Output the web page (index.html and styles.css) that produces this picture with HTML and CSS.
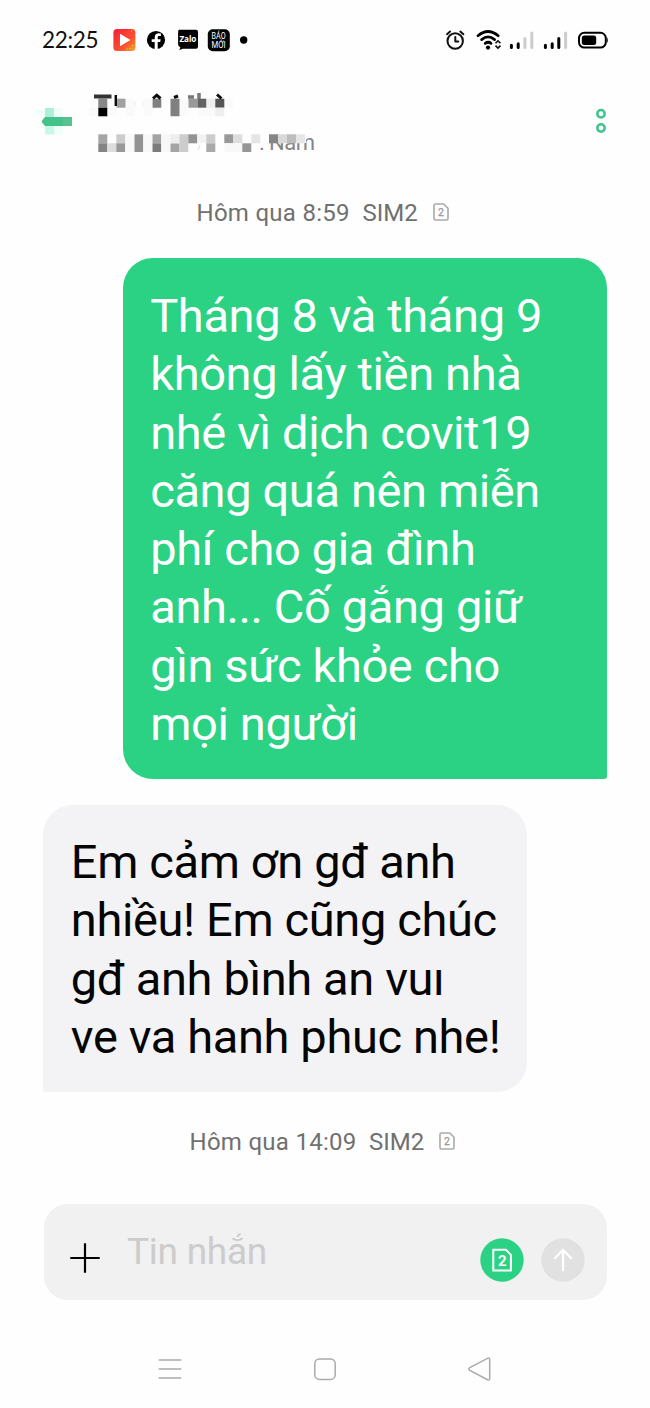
FILE: index.html
```
<!DOCTYPE html>
<html lang="vi">
<head>
<meta charset="utf-8">
<title>Tin nhắn</title>
<link rel="stylesheet" href="styles.css">
</head>
<body>
<div class="phone">
  <div class="status">
    <span class="clock">22:25</span>
    <svg class="apps" width="140" height="26" viewBox="0 0 140 26">
      <defs><linearGradient id="play" x1="0" y1="0" x2="1" y2="1"><stop offset="0.1" stop-color="#fa2438"/><stop offset="0.65" stop-color="#fb5430"/><stop offset="1" stop-color="#f4a52a"/></linearGradient></defs>
      <rect x="1.4" y="2" width="22" height="22" rx="3.5" fill="url(#play)"/>
      <path d="M8 6.7 18.4 13 8 19.3z" fill="#fff"/>
      <path d="M17 21.5h1.5M20 18.5h1.5M20.5 21.5h1M14.5 22h1M19 4h1" stroke="#e3c032" stroke-width="1.5"/>
      <circle cx="44" cy="13" r="9.1" fill="#000"/>
      <path d="M42.7 22.3v-7.2h-3v-2.8h3v-1.8c0-3 1.6-4.3 4.2-4.3l2 .2v2.5h-1.5c-1.3 0-1.7.7-1.7 1.6v1.8h3l-.5 2.8h-2.5v7.2z" fill="#fff"/>
      <path d="M67.3 2.8H84q2 0 2 2v15q0 2-2 2H71l-3.8 1.2 1.2-2.4q-2.3-1.3-2.3-3V4.8q0-2 1.2-2z" fill="#000"/>
      <text class="zalo" x="67.5" y="15.4" textLength="16.8">Zalo</text>
      <rect x="95.8" y="2.2" width="22" height="22" rx="5" fill="#000"/>
      <text class="bao" x="99.6" y="12.2" textLength="14" lengthAdjust="spacingAndGlyphs">BÁO</text>
      <text class="bao" x="99.6" y="21.3" textLength="14" lengthAdjust="spacingAndGlyphs">MỚI</text>
      <circle cx="131.7" cy="13" r="3.7" fill="#000"/>
    </svg>
    <svg class="signals" width="164" height="26" viewBox="0 0 164 26">
      <g fill="none" stroke="#111" stroke-width="2" stroke-linecap="round" stroke-linejoin="round">
        <circle cx="10.2" cy="14" r="7.7"/><path d="M10.3 10v4.4h3M2 7.2 5.1 4.6M15.3 4.6l3.1 2.6"/>
      </g>
      <g fill="none" stroke="#000" stroke-width="2.7" stroke-linecap="round">
        <path d="M33 8.7q10-8.4 20.2 0"/><path d="M36.6 12.6q6.5-5.5 13 0"/><path d="M40.2 16.4q3-2.3 5.8 0"/>
      </g>
      <circle cx="43" cy="20.6" r="2.1"/>
      <path d="M50.5 16.3 53 13.8l2.5 2.5M50.5 18.6l2.5 2.5 2.5-2.5" fill="none" stroke="#111" stroke-width="1.6"/>
      <g stroke-width="3" stroke-linecap="round" fill="none">
        <path stroke="#000" d="M66.4 18.3v2.2M73.2 16.7v3.8M100.4 18.3v2.2M107.2 16.7v3.8M113.8 11.600v8.900"/>
        <path stroke="#ccc" d="M79.900 11.600v8.900M86.800 6v14.500M120.600 6v14.500"/>
      </g>
      <rect x="134" y="5.800" width="26.800" height="14.800" rx="5.300" fill="none" stroke="#000" stroke-width="2"/>
      <rect x="136.800" y="8.500" width="14.400" height="9.600" rx="2.500"/>
      <path d="M161.800 10q2 3.200 0 6.400z"/>
    </svg>
  </div>

  <div class="header">
    <svg width="300" height="80" viewBox="0 0 300 80">
      <defs><filter id="soft" x="-5%" y="-20%" width="110%" height="150%"><feGaussianBlur stdDeviation="0.7"/></filter></defs>
      <path fill="#aef0d6" d="M15 18h9v9h-9z"/><path fill="#c8f9e6" d="M15 36h9v8.500h-9z"/><path fill="#f1fdf9" d="M24 18h9v9h-9zM24 36h9v8h-9zM6 20h9v5H6z"/>
      <path fill="#45c28a" d="M15 27h27v9H15l-3-3.500v-2z"/><path fill="#58c18e" d="M33 27h9v9h-9z"/>
      <g fill="#888">
        <path fill="#fafafa" d="M59 17.700h9v8.600h-9zM77.500 17.700h9v8.600h-9zM95.500 8.700h9v17.600h-9zM114 8.700h8.500v17.600H114zM149.500 8.700h9v17.600h-9zM167.500 17.700h18v8.600h-18zM194.300 8.700h9v9h-9z"/>
        <path d="M68.300 8.700h9v9h-9z"/><path fill="#000" d="M68.300 17.700h9v8.600h-9z"/>
        <path fill="#a0a0a0" d="M86.500 8.700h9v9h-9z"/>
        <path fill="#808080" d="M122.600 8.700h8.700v9h-8.700zM140.500 8.700h9v17.600h-9z"/>
        <path fill="#999" d="M158.500 8.700h9v9h-9z"/><path fill="#626262" d="M167.500 8.700h9v9h-9z"/>
        <path fill="#eee" d="M176.500 8.700h9v9h-9z"/><path fill="#555" d="M185.300 8.700h9v9h-9z"/>
        <path fill="#eee" d="M104.500 11h1v6h-1zM112.500 11h1v6h-1zM185.300 17.700h9v8.600h-9z"/>
      </g>
      <g filter="url(#soft)" fill="none" stroke="#111">
        <path stroke="#333" stroke-width="4" d="M64 6.500h17.500"/><path stroke-width="2.400" d="M85.800 5v11"/>
        <path stroke-width="3" d="m123 8.500 3.700-3.300 3.800 3.300M144 7.500l4-1.500M187 4.500l4.500 4"/><path stroke="#777" stroke-width="3.500" d="M158 7h6M169 3v6"/>
      </g>
      <text class="place" x="229" y="60">.</text>
      <text class="place" x="239" y="60" textLength="46">Nam</text>
      <path fill="#fefefe" d="M239 42h37v11h-37z"/>
      <path fill="#a6a6a6" d="M68.300 44.300h9v9h-9z"/><path fill="#848484" d="M68.300 53.300h9v8.700h-9z"/>
      <path fill="#ddd" d="M77.300 53.300h9v8.700h-9z"/><path fill="#ccc" d="M86.300 44.300h9v9h-9z"/><path fill="#999" d="M86.300 53.300h9v8.700h-9z"/>
      <path fill="#929292" d="M104.300 44.300h9V62h-9z"/><path fill="#a3a3a3" d="M122.300 44.300h9v9h-9z"/><path fill="#7c7c7c" d="M122.300 53.300h9V62h-9z"/>
      <path fill="#a5a5a5" d="M140.300 53.300h9V62h-9z"/><path fill="#ccc" d="M149.300 44.300h9V62h-9z"/><path fill="#eee" d="M140.300 44.300h9v9h-9z"/><path fill="#939393" d="M158.300 44.300h9v9h-9z"/>
      <path fill="#f3f3f3" d="M167.300 44.300h9v9h-9z"/><path fill="#ccc" d="M176.300 44.300h9v9h-9z"/><path fill="#aaa" d="M176.300 53.300h9V62h-9z"/>
      <path fill="#999" d="M194.300 44.300h9v9h-9z"/><path fill="#ddd" d="M203.300 44.300h9v9h-9z"/><path fill="#f8f8f8" d="M203.300 53.300h9V62h-9zM194.300 53.300h9V62h-9zM95.300 44.300h9V62h-9zM113.300 44.300h9V62h-9zM131.300 44.300h9V62h-9z"/>
      <path fill="#969696" d="M212.300 53.300h9V62h-9z"/><path fill="#e5e5e5" d="M221.300 44.300h9v9h-9z"/>
      <path fill="#858585" d="M239 44.300h9v9h-9z"/><path fill="#d9d9d9" d="M248 44.300h9v9h-9z"/><path fill="#bdbdbd" d="M257 44.300h9v9h-9z"/><path fill="#e6e6e6" d="M266 44.300h9v9h-9z"/>
      <path d="m168 60 2-5" stroke="#ddd" stroke-width="1.200"/>
    </svg>
    <svg class="more" width="14" height="30" viewBox="0 0 14 30" fill="none" stroke="#3dc58c" stroke-width="2.500"><circle cx="7" cy="7.700" r="3.700"/><circle cx="7" cy="22" r="3.700"/></svg>
  </div>

  <div class="stamp stamp-first">
    <span class="day">Hôm qua 8:59</span><span class="sim">SIM2</span>
    <svg class="card" width="16" height="18" viewBox="0 0 16 18"><path d="M2.500 1h8.200L15 5.300v10.200q0 1.500-1.500 1.500h-11Q1 17 1 15.500v-13Q1 1 2.500 1z"/><text x="5" y="12.500">2</text></svg>
  </div>

  <div class="bubble sent">
    <span>Tháng 8 và tháng 9</span>
    <span>không lấy tiền nhà</span>
    <span>nhé vì dịch covit19</span>
    <span>căng quá nên miễn</span>
    <span>phí cho gia đình</span>
    <span>anh... Cố gắng giữ</span>
    <span>gìn sức khỏe cho</span>
    <span>mọi người</span>
  </div>

  <div class="bubble received">
    <span>Em cảm ơn gđ anh</span>
    <span>nhiều! Em cũng chúc</span>
    <span>gđ anh bình an vuı</span>
    <span>ve va hanh phuc nhe!</span>
  </div>

  <div class="stamp stamp-second">
    <span class="day">Hôm qua 14:09</span><span class="sim">SIM2</span>
    <svg class="card" width="16" height="18" viewBox="0 0 16 18"><path d="M2.500 1h8.200L15 5.300v10.200q0 1.500-1.500 1.500h-11Q1 17 1 15.500v-13Q1 1 2.500 1z"/><text x="5" y="12.500">2</text></svg>
  </div>

  <div class="composer">
    <svg class="plus" width="30" height="30" viewBox="0 0 30 30"><path d="M15 .3v29.400M.3 15h29.400" stroke="#000" stroke-width="2.200"/></svg>
    <span class="hint">Tin nhắn</span>
    <svg class="simbtn" width="44" height="44" viewBox="0 0 44 44"><circle cx="22" cy="22" r="21.700" fill="#2bd283"/><path d="M13.300 11.800h12.600l5 5v15.600H13.300z" fill="none" stroke="#fff" stroke-width="2"/><text x="18" y="27.500">2</text></svg>
    <svg class="send" width="44" height="44" viewBox="0 0 44 44"><circle cx="22" cy="22" r="21.700" fill="#e1e1e1"/><path d="M22 33.200V12.500M13.300 20.700 22 12l8.700 8.700" fill="none" stroke="#fff" stroke-width="2.300"/></svg>
  </div>

  <div class="nav">
    <svg width="24" height="26" viewBox="0 0 24 26"><path d="M1.200 4h21.600M1.200 13h21.600M1.200 22h21.600"/></svg>
    <svg width="24" height="26" viewBox="0 0 24 26"><rect x="1.800" y="3" width="20.400" height="20.400" rx="4.700"/></svg>
    <svg width="24" height="26" viewBox="0 0 24 26"><path d="M20.500 2.300 2.800 11.600q-2 1.400 0 2.800l17.700 9.300q2 .8 2.200-1.200v-19q-.2-2-2.200-1.200z"/></svg>
  </div>
</div>
</body>
</html>
```
FILE: styles.css
```
body { margin: 0; background: #fefefe; font-family: Roboto, "Noto Sans", sans-serif; }
.phone { width: 650px; height: 1408px; display: flex; flex-direction: column; overflow: hidden; }
.phone > * { flex-shrink: 0; box-sizing: border-box; }
svg { display: block; flex-shrink: 0; }

.status { height: 80px; padding: 27px 41px 0 42px; display: flex; }
.clock { width: 70px; font: 22.5px/26px Lato, sans-serif; letter-spacing: -0.35px; color: #111; }
.signals { margin-left: auto; }
.zalo { font: bold 8.2px "Open Sans", sans-serif; fill: #fff; }
.bao { font: 8.8px Roboto, sans-serif; fill: #fff; }

.header { height: 100px; padding: 10px 42px 0 30px; display: flex; justify-content: space-between; }
.more { margin-top: 16px; }
.place { font-size: 22px; fill: #858585; }

.stamp { display: flex; font-size: 24px; line-height: 28px; color: #707070; white-space: pre; }
.stamp-first { height: 77.5px; padding: 19px 0 0 196.5px; }
.stamp-second { height: 112px; padding: 36px 0 0 189.5px; }
.day { letter-spacing: 0.28px; }
.stamp-first .day { width: 166px; }
.stamp-second .day { width: 179.5px; }
.sim { width: 70px; }
.card { margin-top: 4px; fill: none; stroke: #aaa; stroke-width: 1.6; }
.card text { font-size: 10.5px; fill: #999; stroke: #999; stroke-width: 0.3; }

.bubble { font-size: 47px; line-height: 58.3px; letter-spacing: -0.37px; white-space: nowrap; }
.bubble span { display: block; width: max-content; }
.sent { height: 521px; width: 484px; margin-left: 122.7px; padding: 29.5px 27.5px 0; color: #fff; background: #2bd283; border-radius: 30px 30px 3px 30px; }
.received { height: 287px; width: 483.7px; margin: 26px 0 0 43.3px; padding: 28.5px 27.5px 0; color: #050505; background: #f3f3f5; border-radius: 30px 30px 30px 2px; }

.composer { height: 96px; width: 563px; margin-left: 43.5px; padding: 0 21.5px 0 26.5px; display: flex; background: #f1f1f1; border-radius: 24px; }
.plus { margin-top: 39.5px; }
.hint { margin: 27px auto 0 27px; font-size: 37px; line-height: 42px; letter-spacing: -0.25px; color: #ccc; }
.simbtn, .send { margin-top: 34.5px; }
.simbtn { margin-right: 17.5px; }
.simbtn text { font-size: 15px; font-weight: bold; fill: #fff; }

.nav { padding: 56px 159px 0 158px; display: flex; justify-content: space-between; fill: none; stroke: #aaa; stroke-width: 1.5; stroke-linecap: round; }
```
